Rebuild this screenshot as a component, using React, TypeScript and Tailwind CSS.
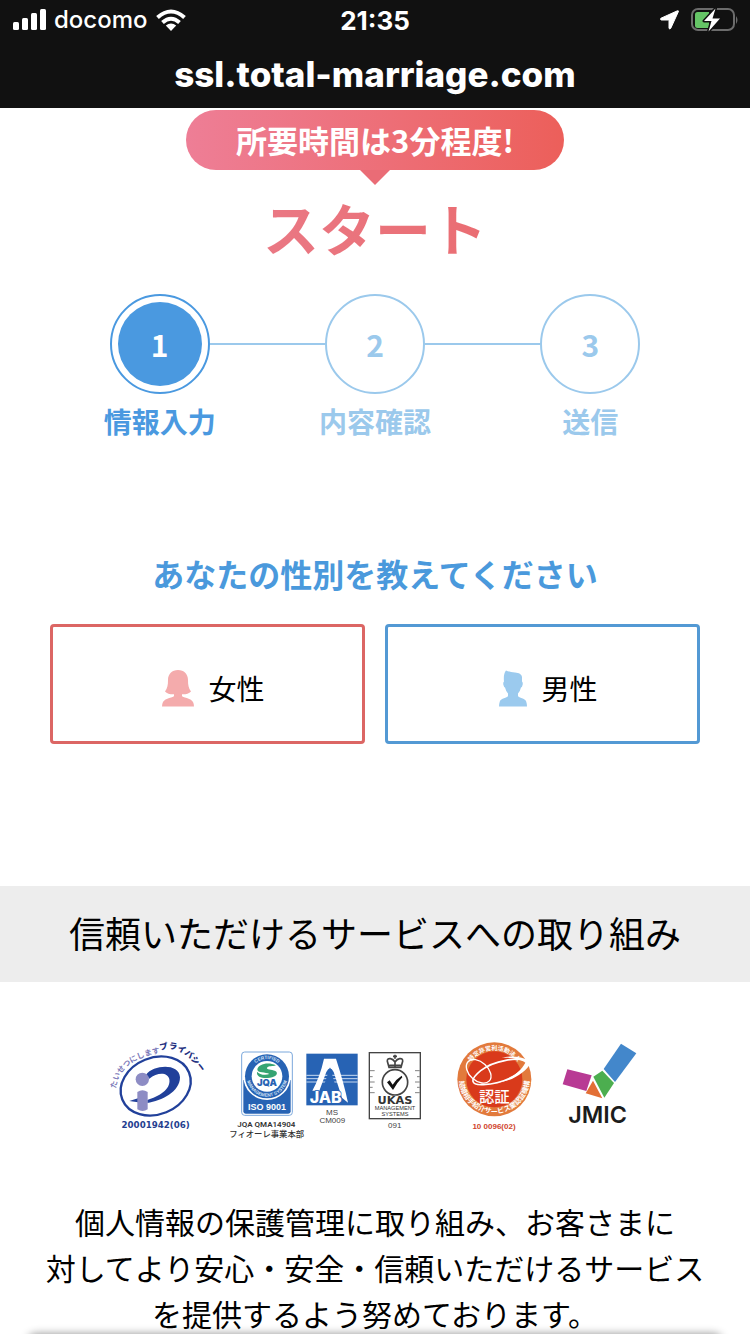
import clsx from 'clsx'

const steps = [
  { n: 1, label: '情報入力' },
  { n: 2, label: '内容確認' },
  { n: 3, label: '送信' },
]

function StatusBar() {
  return (
    <div className="grid h-10 grid-cols-3 items-center pl-3 pr-3">
      <div className="flex items-center gap-2 text-2xl font-medium">
        <svg className="h-6 w-[34px]" viewBox="0 0 34 24" fill="#fff">
          <rect x="1" y="14" width="6" height="8" rx="1.5" />
          <rect x="10" y="10" width="6" height="12" rx="1.5" />
          <rect x="19" y="5" width="6" height="17" rx="1.5" />
          <rect x="28" y="1" width="6" height="21" rx="1.5" />
        </svg>
        <span>docomo</span>
        <svg className="h-[22px] w-[30px]" viewBox="0 0 30 22" fill="none" stroke="#fff" strokeWidth="4">
          <path d="M1.5 8.5Q15-3.5 28.5 8.5" />
          <path d="M6.5 13.5Q15 6 23.5 13.5" />
          <path d="M15 22l-5.2-5.4q5.2-4.2 10.4 0z" fill="#fff" stroke="none" />
        </svg>
      </div>
      <div className="text-center text-[26px] font-bold">21:35</div>
      <div className="flex items-center justify-end gap-[11px]">
        <svg className="h-5 w-[19px]" viewBox="0 0 19 20" fill="#fff" stroke="#fff" strokeWidth="1">
          <path d="M17.4.8Q19 .4 18.2 2L10.8 18.2Q9.4 20 9 18V10.6Q9 10 8.4 10H1.4Q-.4 9.4 1 8.2Z" />
        </svg>
        <svg className="h-6 w-12" viewBox="0 0 48 24">
          <rect x="2" y="1" width="42" height="21" rx="6" fill="none" stroke="#6c6c6c" strokeWidth="2" />
          <path d="M46 8v8q3-4 0-8z" fill="#6c6c6c" />
          <path d="M7.5 4H19v16H7.5Q5 20 5 17.5V6.5Q5 4 7.5 4z" fill="#65c466" />
          <path
            d="M25.5.5L14 13h7.5L18.5 23.5 30 10.5h-7.5z"
            fill="#fff"
            stroke="#111"
            strokeWidth="3"
            strokeLinejoin="round"
            paintOrder="stroke"
          />
        </svg>
      </div>
    </div>
  )
}

function Steps() {
  return (
    <ol className="mt-[31px] grid grid-cols-3 px-[52px] font-bold">
      {steps.map(({ n, label }) => {
        const active = n === 1
        return (
          <li key={n} className={clsx('text-center', active ? 'text-[#4a99e0]' : 'text-[#9bc9ec]')}>
            <div className="flex items-center">
              <span className={clsx('h-[2px] flex-1', n > 1 && 'bg-[#9bc9ec]')} />
              <span className="flex size-[100px] rounded-full border-2 border-current p-[6px]">
                <span
                  className={clsx(
                    'flex flex-1 items-center justify-center rounded-full text-[30px]',
                    active && 'bg-[#4a99e0]'
                  )}
                >
                  <span className={clsx(active && 'text-white')}>{n}</span>
                </span>
              </span>
              <span className={clsx('h-[2px] flex-1', n < 3 && 'bg-[#9bc9ec]')} />
            </div>
            <p className="mt-[7px] text-[28px] leading-10">{label}</p>
          </li>
        )
      })}
    </ol>
  )
}

function GenderButtons() {
  const base =
    'flex h-[120px] items-center justify-center gap-[14px] rounded border-[3px] pt-2 pl-3 text-[28px] text-black'
  return (
    <div className="mt-[27px] grid grid-cols-2 gap-5 px-[50px]">
      <button type="button" className={clsx(base, 'border-[#dc6664]')}>
        <svg className="h-[37px] w-8" viewBox="0 0 32 37" fill="#f4abac">
          <path d="M16 0C10 0 6 4 6 10C6 15 5.5 18 3 21.5C5 24 9 24.5 12 24.3V26C12 27.5 3 28 1 32Q0 34 0 36.5H32Q32 34 31 32C29 28 20 27.5 20 26V24.3C23 24.5 27 24 29 21.5C26.5 18 26 15 26 10C26 4 22 0 16 0Z" />
        </svg>
        女性
      </button>
      <button type="button" className={clsx(base, 'border-[#5399d4]')}>
        <svg className="h-[37px] w-7" viewBox="0 0 28 37" fill="#9bcaee">
          <path d="M7 .5C5 3 4.5 7 5 11.5Q4 12 4.3 14.5Q4.8 17 6 17.5Q7 21.5 9 23.5V26C8 28 2 28 .8 31.5Q0 34 0 36.5H28Q28 34 27.2 31.5C26 28 20 28 19 26V23.5Q21 21.5 22 17.5Q23.3 17 23.7 14.5Q24 12 23 11.5V7C22.5 4 20 3 16 2.5C12 2 9 1.5 7 .5Z" />
        </svg>
        男性
      </button>
    </div>
  )
}

function PrivacyMark() {
  return (
    <svg className="h-[102px] w-24 overflow-visible" viewBox="30 24 288 306" role="img" aria-label="プライバシーマーク">
      <path id="privacy-left" d="M48 176C54 122 96 78 200 66" fill="none" />
      <path id="privacy-right" d="M181 62C224 46 262 68 304 128" fill="none" />
      <text fontSize="23" fontWeight="700" fill="#7a78b8">
        <textPath href="#privacy-left">たいせつにします</textPath>
      </text>
      <text fontSize="25" fontWeight="900" fill="#24307f">
        <textPath href="#privacy-right">プライバシー</textPath>
      </text>
      <ellipse cx="167" cy="168" rx="108" ry="85" transform="rotate(-22 167 168)" fill="none" stroke="#21409a" strokeWidth="7" />
      <path d="M138 134C160 104 238 98 240 142C240 186 185 212 142 219V210C175 200 213 180 208 148C204 126 172 126 148 146Z" fill="#21409a" />
      <path d="M88 213L114 205V217Z" fill="#21409a" />
      <circle cx="127" cy="148" r="20" fill="#8d8cc4" />
      <path d="M112 186Q127 176 143 186V238Q128 248 112 238Z" fill="#8d8cc4" />
      <text x="167" y="294" textAnchor="middle" fontSize="26" fontWeight="700" fill="#24408f" fontFamily="DejaVu Sans, sans-serif">
        20001942(06)
      </text>
    </svg>
  )
}

function IsoMarks() {
  return (
    <svg className="h-[102px] w-[204px]" viewBox="18 24 612 306" role="img" aria-label="ISO 9001 JAB UKAS">
      {/* JQA */}
      <rect x="65" y="66" width="152" height="190" rx="9" fill="#fff" stroke="#7ba8dc" strokeWidth="3" />
      <path d="M70 150H212V244Q212 251 205 251H77Q70 251 70 244Z" fill="#2763b4" />
      <circle cx="141" cy="139" r="71" fill="#fff" />
      <circle cx="141" cy="139" r="66" fill="#2763b4" />
      <circle cx="141" cy="139" r="46" fill="#fff" />
      <path id="jqa-top" d="M89 139A52 52 0 0 1 193 139" fill="none" />
      <path id="jqa-bottom" d="M80 139A61 61 0 0 0 202 139" fill="none" />
      <g fontSize="14" fontWeight="700" fill="#d3e2f5" textAnchor="middle" fontFamily="Liberation Sans, sans-serif">
        <text>
          <textPath href="#jqa-top" startOffset="50%">CERTIFIED</textPath>
        </text>
        <text>
          <textPath href="#jqa-bottom" startOffset="50%">MANAGEMENT SYSTEM</textPath>
        </text>
      </g>
      <path d="M168 106C145 94 114 102 112 118C111 130 138 126 148 132C136 137 118 134 111 125C108 143 132 146 150 143C170 140 176 129 166 123C154 117 138 119 141 113C147 107 157 110 168 106Z" fill="#35a473" />
      <text x="141" y="167" textAnchor="middle" fontSize="28" fontWeight="900" fill="#2763b4" fontFamily="Inter, sans-serif">
        JQA
      </text>
      <text x="141" y="240" textAnchor="middle" fontSize="27" fontWeight="700" fill="#fff" fontFamily="Liberation Sans, sans-serif">
        ISO 9001
      </text>
      <text x="139" y="290" textAnchor="middle" fontSize="24" fontWeight="600" fill="#333" fontFamily="Roboto, sans-serif">
        JQA QMA14904
      </text>
      <text x="140" y="321" textAnchor="middle" fontSize="25" fontWeight="500" fill="#333">
        フィオーレ事業本部
      </text>

      {/* JAB */}
      <rect x="259" y="71" width="154" height="155" fill="#2763b4" />
      <path d="M259 136H413M259 146H413M259 156H413" stroke="#c8daf0" strokeWidth="3" />
      <path d="M312 86H348Q372 160 384 218L366 203L341 126Q330 104 319 126L298 182H277Q300 140 312 86Z" fill="#fff" />
      <path d="M330 112L344 160H314Z" fill="#2763b4" />
      <text x="317" y="220" textAnchor="middle" fontSize="48" fontWeight="800" fill="#fff" stroke="#2763b4" strokeWidth="4" paintOrder="stroke" fontFamily="Inter, sans-serif">
        JAB
      </text>
      <g fontSize="24" fill="#444" textAnchor="middle" fontFamily="Liberation Sans, sans-serif">
        <text x="336" y="255">MS</text>
        <text x="337" y="280">CM009</text>
        <text x="524" y="294">091</text>
      </g>

      {/* UKAS */}
      <g fill="none" stroke="#444">
        <rect x="448" y="68" width="153" height="198" strokeWidth="4" />
        <path d="M450 122H464M450 140H458M450 156H464M450 172H458M450 188H464M599 122H585M599 140H591M599 156H585M599 172H591M599 188H585" strokeWidth="2" />
        <circle cx="525" cy="157" r="38" strokeWidth="5" />
        <path d="M507 112L502 94Q501 85 511 86Q519 87 525 96Q531 87 539 86Q549 85 548 94L543 112ZM525 96V110M508 106H542" strokeWidth="5" />
        <path d="M525 74V86M519 79H531" strokeWidth="5" />
      </g>
      <path d="M501 157L509 151L518 164Q530 146 545 137L547 142Q531 158 519 180Z" fill="#111" />
      <text x="525" y="223" textAnchor="middle" fontSize="34" fontWeight="800" fill="#333" fontFamily="DejaVu Sans, Inter, sans-serif">
        UKAS
      </text>
      <g fontSize="17" fontWeight="500" fill="#333" textAnchor="middle" fontFamily="Liberation Sans, sans-serif">
        <text x="525" y="241">MANAGEMENT</text>
        <text x="525" y="258">SYSTEMS</text>
      </g>
    </svg>
  )
}

function CertifiedMark() {
  return (
    <svg className="h-[102px] w-[90px]" viewBox="30 24 270 306" role="img" aria-label="結婚相手紹介サービス業認証">
      <circle cx="163" cy="148" r="111" fill="#e27a3c" />
      <circle cx="163" cy="148" r="84" fill="#d93a1b" />
      <path id="cert-top" d="M75 148A88 88 0 0 1 251 148" fill="none" />
      <path id="cert-bottom" d="M58 130A106 106 0 1 0 268 130" fill="none" />
      <g fill="#fff" fontWeight="700" textAnchor="middle">
        <text fontSize="18">
          <textPath href="#cert-top" startOffset="50%">特定非営利活動法人</textPath>
        </text>
        <text fontSize="21">
          <textPath href="#cert-bottom" startOffset="50%">結婚相手紹介サービス業認証機構</textPath>
        </text>
      </g>
      <g fill="none" stroke="#fff">
        <ellipse cx="116" cy="124" rx="43" ry="28" transform="rotate(42 116 124)" strokeWidth="4" />
        <path d="M271 96C235 78 160 92 122 122C88 150 92 166 130 164C190 160 240 134 271 96" strokeWidth="5" />
      </g>
      <path d="M271 94C238 76 205 78 185 84C215 82 245 88 256 98C240 128 205 150 175 158C220 152 258 125 273 98Z" fill="#fff" />
      <text x="163" y="215" textAnchor="middle" fontSize="46" fontWeight="500" fill="#fff">
        認証
      </text>
      <text x="162" y="298" textAnchor="middle" fontSize="24" fontWeight="700" fill="#d0452c" fontFamily="Liberation Sans, sans-serif">
        10 0096(02)
      </text>
    </svg>
  )
}

function JmicMark() {
  return (
    <svg className="h-[102px] w-20" viewBox="360 24 240 306" role="img" aria-label="JMIC">
      <path d="M382 118L455 136L439 183L368 163Z" fill="#b83a94" />
      <path d="M459 152L487 205L437 190Z" fill="#e36f35" />
      <path d="M487 122L522 159L493 203L460 140Z" fill="#4cae4f" />
      <path d="M543 41L589 70L525 156L491 117Z" fill="#4387cb" />
      <text x="473" y="279" textAnchor="middle" fontSize="70" fontWeight="600" fill="#1c1c1c" fontFamily="Inter, sans-serif">
        JMIC
      </text>
    </svg>
  )
}

export default function App() {
  return (
    <div
      lang="ja"
      className="relative flex h-screen flex-col overflow-hidden bg-white font-['Noto_Sans_CJK_JP',sans-serif] text-black"
    >
      <header className="shrink-0 bg-[#111] font-['Inter',sans-serif] text-white">
        <StatusBar />
        <div className="text-center text-[35px] leading-[68px] font-extrabold">ssl.total-marriage.com</div>
      </header>

      <main className="flex-1 overflow-y-auto pt-[2px] [scrollbar-width:none]">
        <div className="flex flex-col items-center">
          <p className="flex h-[60px] items-center rounded-full bg-linear-to-r from-[#ee7e96] to-[#ec5f5a] px-[50px] text-[31px] font-bold text-white">
            所要時間は3分程度!
          </p>
          <span className="h-[15px] w-[30px] bg-[#ea6c76] [clip-path:polygon(0_0,100%_0,50%_100%)]" />
          <h1 className="mt-[6px] bg-linear-to-r from-[#ea7884] to-[#ea6d72] bg-clip-text text-[56px] leading-[72px] font-bold text-transparent">
            スタート
          </h1>
        </div>

        <Steps />

        <h2 className="mt-[108px] text-center text-[32px] leading-[48px] font-bold text-[#4a99dc]">
          あなたの性別を教えてください
        </h2>
        <GenderButtons />

        <section className="mt-[142px]">
          <h2 className="bg-[#ededed] pb-1 text-center text-4xl leading-[92px]">信頼いただけるサービスへの取り組み</h2>
          <div className="mt-14 flex justify-center gap-5">
            <PrivacyMark />
            <IsoMarks />
            <CertifiedMark />
            <JmicMark />
          </div>
          <p className="mt-[58px] text-center text-[30px] leading-[46px]">
            個人情報の保護管理に取り組み、お客さまに
            <br />
            対してより安心・安全・信頼いただけるサービス
            <br />
            を提供するよう努めております。
          </p>
        </section>
      </main>

      {/* edge of the browser toolbar */}
      <div className="pointer-events-none absolute inset-x-7 -bottom-2 h-2 rounded-t-lg shadow-[0_0_9px_rgba(0,0,0,0.45)]" />
    </div>
  )
}
